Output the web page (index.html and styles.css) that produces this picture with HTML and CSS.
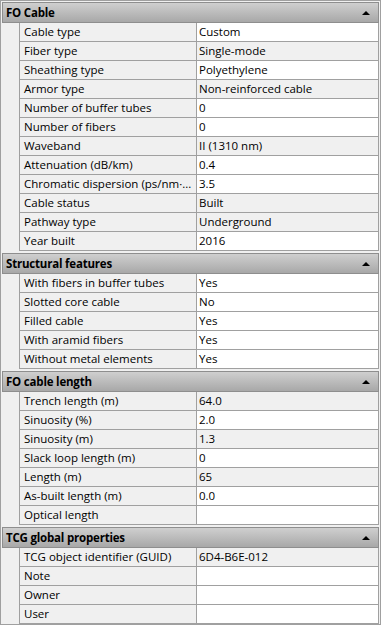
FILE: index.html
```html
<!DOCTYPE html>
<html lang="en">
  <head>
    <meta charset="UTF-8" />
    <meta name="viewport" content="width=device-width, initial-scale=1.0" />
    <title>FO Cable properties</title>
    <link rel="stylesheet" href="styles.css">
  </head>
  <body>
    <div class="props">
      <!-- FO Cable -->
      <div class="group">
        <div class="group-head"><span>FO Cable</span><span class="caret"></span></div>
        <div class="row"><div class="label">Cable type</div><div class="value">Custom</div></div>
        <div class="row"><div class="label">Fiber type</div><div class="value ro">Single-mode</div></div>
        <div class="row"><div class="label">Sheathing type</div><div class="value">Polyethylene</div></div>
        <div class="row"><div class="label">Armor type</div><div class="value ro">Non-reinforced cable</div></div>
        <div class="row"><div class="label">Number of buffer tubes</div><div class="value">0</div></div>
        <div class="row"><div class="label">Number of fibers</div><div class="value">0</div></div>
        <div class="row"><div class="label">Waveband</div><div class="value ro">II (1310 nm)</div></div>
        <div class="row"><div class="label">Attenuation (dB/km)</div><div class="value">0.4</div></div>
        <div class="row"><div class="label">Chromatic dispersion (ps/nm·...</div><div class="value">3.5</div></div>
        <div class="row"><div class="label">Cable status</div><div class="value ro">Built</div></div>
        <div class="row"><div class="label">Pathway type</div><div class="value ro">Underground</div></div>
        <div class="row"><div class="label">Year built</div><div class="value">2016</div></div>
      </div>

      <!-- Structural features -->
      <div class="group">
        <div class="group-head"><span>Structural features</span><span class="caret"></span></div>
        <div class="row"><div class="label">With fibers in buffer tubes</div><div class="value">Yes</div></div>
        <div class="row"><div class="label">Slotted core cable</div><div class="value">No</div></div>
        <div class="row"><div class="label">Filled cable</div><div class="value">Yes</div></div>
        <div class="row"><div class="label">With aramid fibers</div><div class="value">Yes</div></div>
        <div class="row"><div class="label">Without metal elements</div><div class="value">Yes</div></div>
      </div>

      <!-- FO cable length -->
      <div class="group">
        <div class="group-head"><span>FO cable length</span><span class="caret"></span></div>
        <div class="row"><div class="label">Trench length (m)</div><div class="value ro">64.0</div></div>
        <div class="row"><div class="label">Sinuosity (%)</div><div class="value">2.0</div></div>
        <div class="row"><div class="label">Sinuosity (m)</div><div class="value ro">1.3</div></div>
        <div class="row"><div class="label">Slack loop length (m)</div><div class="value">0</div></div>
        <div class="row"><div class="label">Length (m)</div><div class="value ro">65</div></div>
        <div class="row"><div class="label">As-built length (m)</div><div class="value">0.0</div></div>
        <div class="row"><div class="label">Optical length</div><div class="value"></div></div>
      </div>

      <!-- TCG global properties -->
      <div class="group">
        <div class="group-head"><span>TCG global properties</span><span class="caret"></span></div>
        <div class="row"><div class="label">TCG object identifier (GUID)</div><div class="value ro">6D4-B6E-012</div></div>
        <div class="row"><div class="label">Note</div><div class="value"></div></div>
        <div class="row"><div class="label">Owner</div><div class="value"></div></div>
        <div class="row"><div class="label">User</div><div class="value"></div></div>
      </div>
    </div>
  </body>
</html>
```

FILE: styles.css
```css
body {
  margin: 0;
  background-color: #ffffff;
}

.props {
  width: 381px;
  height: 625px;
  box-sizing: border-box;
  border: 1px solid #a0a0a0;
  padding: 1px 1px 0 1px;
  background-color: #f0f0f0;
  font-family: "Open Sans", "Liberation Sans", sans-serif;
  font-size: 11.5px;
  color: #000000;
}

.group + .group {
  margin-top: 2px;
}

.group-head {
  height: 21px;
  box-sizing: border-box;
  border: 1px solid #8e8e8e;
  background: linear-gradient(#cfcfcf, #a8a8a8);
  display: flex;
  align-items: center;
  justify-content: space-between;
  padding: 0 8px 0 3px;
  font-weight: bold;
  font-size: 11.5px;
  letter-spacing: -0.2px;
}

.caret {
  width: 0;
  height: 0;
  border-left: 4px solid transparent;
  border-right: 4px solid transparent;
  border-bottom: 4px solid #000000;
}

.row {
  display: flex;
  height: 19px;
  padding-left: 17px;
}

.label {
  width: 177px;
  box-sizing: border-box;
  border-left: 1px solid #a0a0a0;
  border-bottom: 1px solid #a0a0a0;
  padding-left: 4px;
  line-height: 18px;
  white-space: nowrap;
  overflow: hidden;
}

.value {
  width: 183px;
  box-sizing: border-box;
  border-left: 1px solid #a0a0a0;
  border-right: 1px solid #a0a0a0;
  border-bottom: 1px solid #a0a0a0;
  padding-left: 2px;
  line-height: 18px;
  background-color: #ffffff;
  white-space: nowrap;
  overflow: hidden;
}

.value.ro {
  background-color: #f0f0f0;
}
```
